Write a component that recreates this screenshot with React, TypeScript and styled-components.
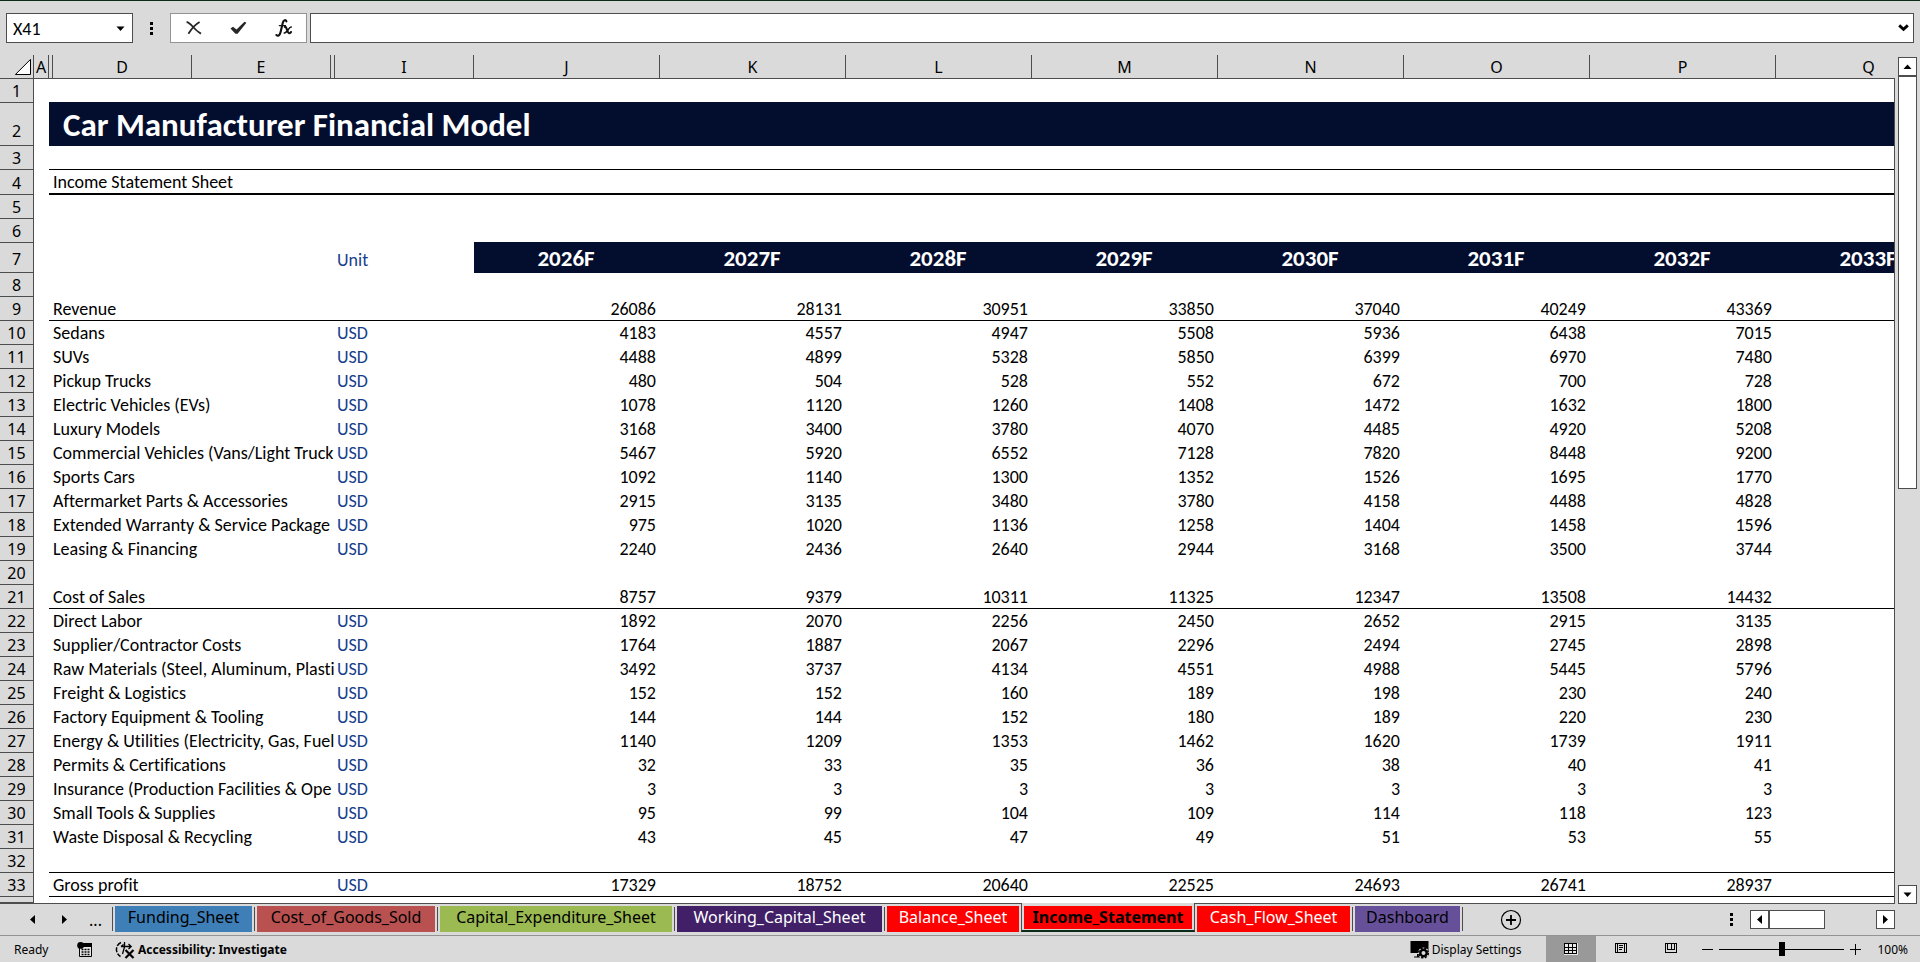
import React from "react";
import styled, { createGlobalStyle, css } from "styled-components";

const colors = {
  chrome: "#dadada",
  line: "#4d4d4d",
  softLine: "#939393",
  navy: "#030d2e",
  unit: "#163e8c",
  green: "#0b2b17",
};

const uiFont = `"Noto Sans", "Open Sans", sans-serif`;
const cellFont = `Carlito, Calibri, Lato, sans-serif`;

const GlobalStyle = createGlobalStyle`
  *, *::before, *::after { box-sizing: border-box; }
  body { margin: 0; background: ${colors.chrome}; color: #000; overflow: hidden; }
  button, input { font: inherit; color: inherit; margin: 0; }
  button { padding: 0; border: 0; background: none; display: inline-flex; align-items: center; justify-content: center; }
`;

const Window = styled.div`
  min-height: 100vh;
  display: flex;
  flex-direction: column;
  border-top: 1px solid ${colors.green};
  background: ${colors.chrome};
  font-family: ${uiFont};
`;

/* ---------- formula bar ---------- */

const FormulaBar = styled.header`
  display: flex;
  align-items: center;
  padding: 12px 6px 12px 6px;
`;

const NameBox = styled.div`
  display: flex;
  width: 127px;
  height: 30px;
  border: 1px solid ${colors.line};
  background: #fff;
`;

const NameInput = styled.input`
  flex: 1;
  min-width: 0;
  padding: 1px 0 0 6px;
  border: 0;
  outline: 0;
  background: none;
  font: 18px ${cellFont};
`;

const NameToggle = styled.button`
  width: 24px;
`;

const BarDots = styled.div`
  width: 37px;
  display: flex;
  justify-content: center;
`;

const FormulaActions = styled.div`
  display: flex;
  align-items: stretch;
  width: 137px;
  height: 30px;
  margin-right: 3px;
  border: 1px solid ${colors.softLine};
  background: #fff;
`;

const FormulaButton = styled.button`
  flex: 1;
`;

const FormulaBox = styled.div`
  flex: 1;
  display: flex;
  height: 30px;
  border: 1px solid ${colors.line};
  background: #fff;
`;

const FormulaInput = styled.input`
  flex: 1;
  min-width: 0;
  padding: 0 6px;
  border: 0;
  outline: 0;
  background: none;
`;

const ExpandButton = styled.button`
  width: 19px;
`;

/* ---------- sheet ---------- */

const Workspace = styled.main`
  flex: 1;
  display: flex;
`;

const SheetFrame = styled.div`
  position: relative;
  flex: 1;
  min-width: 0;
  overflow: hidden;
  border-bottom: 1px solid ${colors.line};
  background: #fff;

  &::after {
    content: "";
    position: absolute;
    top: 23px;
    right: 0;
    bottom: 0;
    width: 1px;
    background: ${colors.line};
  }
`;

const Grid = styled.table`
  width: 1961px;
  table-layout: fixed;
  border-collapse: separate;
  border-spacing: 0;
  font: 18px/21px ${cellFont};
  font-variant-ligatures: none;
`;

const Col = styled.col<{ $w: number }>`
  width: ${(p) => p.$w}px;
`;

const ColumnHead = styled.th`
  height: 24px;
  padding: 2px 0 0;
  overflow: hidden;
  border-right: 1px solid ${colors.line};
  border-bottom: 1px solid ${colors.line};
  background: ${colors.chrome};
  font: 400 16px/21px ${uiFont};
  text-align: center;
`;

const Corner = styled(ColumnHead)`
  padding: 0 1px 2px 0;
  text-align: right;
  line-height: 0;
  vertical-align: bottom;
`;

const Row = styled.tr<{ $h: number; $lift: number }>`
  height: ${(p) => p.$h}px;
  & > * {
    padding-top: ${(p) => (p.$h < 10 ? 0 : 2)}px;
    padding-bottom: ${(p) => p.$lift}px;
  }
`;

const RowHead = styled.th`
  padding-left: 0;
  padding-right: 0;
  border-right: 1px solid ${colors.line};
  border-bottom: 1px solid ${colors.line};
  background: ${colors.chrome};
  font: 400 16px/21px ${uiFont};
  text-align: center;
  vertical-align: bottom;
`;

type Edge = "none" | "thin" | "thick" | "navy";

const edges = {
  none: css`border-bottom: 0;`,
  thin: css`border-bottom: 1px solid #000;`,
  thick: css`border-bottom: 2px solid #000;`,
  navy: css`border-bottom: 1px solid ${colors.navy};`,
};

const Cell = styled.td<{ $edge?: Edge; $fill?: boolean }>`
  padding-left: 0;
  padding-right: 0;
  overflow: hidden;
  white-space: nowrap;
  vertical-align: top;
  background: ${(p) => (p.$fill ? colors.navy : "transparent")};
  ${(p) => edges[p.$edge ?? "none"]}
`;

const LabelCell = styled(Cell)`
  padding-left: 0;
`;

const UnitCell = styled(Cell)`
  padding-left: 2px;
  color: ${colors.unit};
`;

const UnitHeadCell = styled(UnitCell)`
  vertical-align: bottom;
`;

const ValueCell = styled(Cell)`
  padding-right: 4px;
  text-align: right;
`;

const TitleCell = styled(Cell)`
  padding-left: 14px;
  color: #fff;
  font-size: 33px;
  line-height: 36px;
  font-weight: 700;
  vertical-align: bottom;
`;

const YearCell = styled(Cell)`
  padding-right: 2px;
  color: #fff;
  font-size: 23px;
  line-height: 26px;
  font-weight: 700;
  text-align: center;
`;

/* ---------- scroll bars ---------- */

const VerticalBar = styled.div`
  width: 25px;
  padding: 2px 3px 0;
  display: flex;
  flex-direction: column;
`;

const ScrollButton = styled.button`
  flex: none;
  width: 19px;
  height: 19px;
  border: 1px solid ${colors.line};
  background: #fff;
`;

const VerticalTrack = styled.div`
  flex: 1;
`;

const VerticalThumb = styled.div`
  width: 19px;
  height: 51%;
  border: 1px solid ${colors.line};
  background: #fff;
`;

const HorizontalBar = styled.div`
  display: flex;
  width: 145px;
  margin-right: 25px;
`;

const HorizontalTrack = styled.div`
  flex: 1;
`;

const HorizontalThumb = styled.div`
  width: 56px;
  height: 19px;
  border: 1px solid ${colors.line};
  background: #fff;
`;

/* ---------- sheet tabs ---------- */

const TabBar = styled.nav`
  display: flex;
  align-items: center;
  height: 32px;
  border-bottom: 1px solid ${colors.softLine};
`;

const TabScroll = styled.div`
  display: flex;
  align-items: center;
  width: 112px;
  padding-left: 16px;
  font-size: 16px;
  line-height: 24px;
`;

const ArrowButton = styled.button`
  width: 32px;
  height: 24px;
`;

const MoreButton = styled.button`
  width: 31px;
  height: 24px;
`;

const TabList = styled.div`
  align-self: stretch;
  display: flex;
  align-items: flex-start;
`;

const activeSlot = css`
  height: 29px;
  margin-top: -1px;
  padding: 3px 2px 0;
  border: solid ${colors.line};
  border-width: 0 1px;
  border-bottom: 2px solid ${colors.green};
  background: ${colors.chrome};
`;

const TabSlot = styled.div<{ $active?: boolean; $noLine?: boolean }>`
  position: relative;
  display: flex;
  align-items: flex-start;
  padding: 2px 2px 0 ${(p) => (p.$noLine ? 2 : 0)}px;

  &::before {
    content: "";
    display: ${(p) => (p.$noLine || p.$active ? "none" : "block")};
    width: 1px;
    height: 24px;
    margin: 1px 2px 0 0;
    background: ${colors.line};
  }

  ${(p) => p.$active && activeSlot}
`;

const Tab = styled.button<{ $w: number; $bg: string; $fg: string; $active?: boolean }>`
  width: ${(p) => p.$w}px;
  height: ${(p) => (p.$active ? 23 : 26)}px;
  align-items: flex-start;
  background: ${(p) => p.$bg};
  color: ${(p) => p.$fg};
  font-size: 16px;
  line-height: 22px;
  font-weight: ${(p) => (p.$active ? 700 : 400)};
  white-space: nowrap;
`;

const TabEnd = styled.div`
  width: 1px;
  height: 24px;
  margin-top: 3px;
  background: ${colors.line};
`;

const AddButton = styled.button`
  width: 22px;
  height: 22px;
  margin-left: 37px;
`;

const Spacer = styled.div`
  flex: 1;
`;

const TabDots = styled.div`
  display: flex;
  margin-right: 17px;
`;

/* ---------- status bar ---------- */

const StatusBar = styled.footer`
  display: flex;
  align-items: center;
  height: 26px;
  padding: 0 12px 0 14px;
  font-size: 12px;
  line-height: 24px;
`;

const Ready = styled.span`
  width: 63px;
  padding-top: 2px;
`;

const StatusButton = styled.button<{ $bold?: boolean; $end?: number; $gap?: number }>`
  gap: ${(p) => p.$gap ?? 2}px;
  height: 26px;
  padding-top: 2px;
  margin-right: ${(p) => p.$end ?? 0}px;
  font-weight: ${(p) => (p.$bold ? 700 : 400)};
  white-space: nowrap;
`;

const ViewButton = styled.button<{ $on?: boolean }>`
  width: 50px;
  height: 26px;
  background: ${(p) => (p.$on ? "#999" : "transparent")};
`;

const ZoomStep = styled.button`
  width: 23px;
  height: 26px;
`;

const ZoomSlider = styled.input`
  appearance: none;
  width: 125px;
  height: 26px;
  background: linear-gradient(#000, #000) center / 100% 1px no-repeat;
  &::-webkit-slider-thumb {
    appearance: none;
    width: 6px;
    height: 14px;
    background: #000;
  }
`;

const ZoomValue = styled.button`
  margin-left: 10px;
  padding-top: 2px;
`;

/* ---------- icons ---------- */

const Triangle = ({ dir }: { dir: "up" | "down" | "left" | "right" }) => {
  const d = {
    up: "M0.5 7 L4.5 2.5 L8.5 7Z",
    down: "M0.5 2.5 L8.5 2.5 L4.5 7Z",
    left: "M7 0 L7 9 L2 4.5Z",
    right: "M2 0 L2 9 L7 4.5Z",
  }[dir];
  return (
    <svg width="9" height="9" viewBox="0 0 9 9" aria-hidden="true">
      <path d={d} />
    </svg>
  );
};

const DotsIcon = () => (
  <svg width="3" height="13" viewBox="0 0 3 13" shapeRendering="crispEdges" aria-hidden="true">
    <path d="M0 0h3v3H0zM0 5h3v3H0zM0 10h3v3H0z" />
  </svg>
);

const CancelIcon = () => (
  <svg width="16" height="14" viewBox="0 0 16 14" fill="none" stroke="#262626" aria-hidden="true">
    <path d="M0.6 1 C5 1.5 8 9 15 12.6" strokeWidth="1.8" />
    <path d="M13.6 1 C9 3.5 5 8.5 2.4 12.8" strokeWidth="1.8" />
  </svg>
);

const AcceptIcon = () => (
  <svg width="17" height="14" viewBox="0 0 17 14" aria-hidden="true">
    <path d="M0.5 7.5 L3 5.8 L6.5 8.6 L14.5 0.8 L16.4 1.8 L7.6 12.8 L5.4 12.8Z" fill="#262626" />
  </svg>
);

const FxIcon = () => (
  <svg width="18" height="20" viewBox="0 0 18 20" fill="none" stroke="#111" strokeLinecap="round" aria-hidden="true">
    <path d="M11.4 3.4 C11 1.4 8.6 1.6 7.8 4.8 L5.6 14 C4.8 17.4 3 18.6 1.4 17" strokeWidth="2.1" />
    <path d="M4.4 7.6 H10.4" strokeWidth="1.4" />
    <path d="M9.8 9 C12 8.2 12 14.8 14 15.2 C15 15.4 15.6 14.8 16 14" strokeWidth="2.1" />
    <path d="M16.2 9 C14 8.6 12 15.4 9.2 15" strokeWidth="1.5" />
  </svg>
);

const ChevronIcon = () => (
  <svg width="11" height="8" viewBox="0 0 11 8" fill="none" stroke="#000" strokeWidth="2.8" aria-hidden="true">
    <path d="M1.2 1.4 L5.5 5.4 L9.8 1.4" />
  </svg>
);

const CornerIcon = () => (
  <svg width="18" height="18" viewBox="0 0 18 18" aria-hidden="true">
    <path d="M16.5 1.4 V16.5 H1.4Z" fill="#fff" stroke="#000" />
  </svg>
);

const AddIcon = () => (
  <svg width="22" height="22" viewBox="0 0 22 22" fill="none" stroke="#000" aria-hidden="true">
    <circle cx="11" cy="11" r="9.5" strokeWidth="1.2" />
    <path d="M6 11 H16 M11 6 V16" strokeWidth="1.8" />
  </svg>
);

const MacroIcon = () => (
  <svg width="16" height="16" viewBox="0 0 16 16" aria-hidden="true">
    <path d="M2.5 3 V14.5 H14.5 V3" fill="#e8e8e8" stroke="#000" />
    <rect x="6" y="1" width="9" height="4" />
    <circle cx="3.6" cy="3.4" r="3.4" />
    <path d="M4.5 7.5h8M4.5 10h8M4.5 12.5h8" stroke="#000" strokeWidth="1.4" strokeDasharray="2 1" />
  </svg>
);

const AccessibilityIcon = () => (
  <svg width="20" height="18" viewBox="0 0 20 18" fill="none" stroke="#000" aria-hidden="true">
    <path d="M6 1.5 C0 4 0 12 5.5 15.5" strokeWidth="1.5" strokeDasharray="5 1.5" />
    <path d="M6 5.5 H16 M13.5 3 L16.2 5.5 L13.5 8 M8.5 3.5 L6 5.5 M9.5 1 V6 L7.5 13" strokeWidth="1.3" />
    <path d="M10.5 9 L18.5 17 M18.5 9 L10.5 17" strokeWidth="2.2" />
  </svg>
);

const DisplayIcon = () => (
  <svg width="20" height="18" viewBox="0 0 20 18" aria-hidden="true">
    <path d="M0.5 0 H18.5 V12 H0.5Z" />
    <path d="M4 16.5 H10 V13 H7 V15.5 H4Z" />
    <circle cx="13.5" cy="12" r="5.6" fill="#dadada" />
    <circle cx="13.5" cy="12" r="3.2" fill="none" stroke="#000" strokeWidth="2.4" />
    <circle cx="13.5" cy="12" r="4.8" fill="none" stroke="#000" strokeWidth="1.6" strokeDasharray="2.2 1.6" />
  </svg>
);

const NormalViewIcon = () => (
  <svg width="14" height="12" viewBox="0 0 14 12" shapeRendering="crispEdges" aria-hidden="true">
    <rect width="14" height="12" fill="#e8e8e8" />
    <path d="M.5 .5h12v10h-12zM.5 4h12M.5 7.5h12M4.5 .5v10M8.5 .5v10" fill="none" stroke="#000" />
  </svg>
);

const PageViewIcon = () => (
  <svg width="13" height="12" viewBox="0 0 13 12" shapeRendering="crispEdges" fill="none" stroke="#000" aria-hidden="true">
    <path d="M.5 .5h11v9H.5z" />
    <path d="M2.5 .5v9M9.5 .5v9" />
    <path d="M4 2.5h4M4 4.5h4M4 6.5h3" />
  </svg>
);

const BreakViewIcon = () => (
  <svg width="13" height="12" viewBox="0 0 13 12" shapeRendering="crispEdges" fill="none" stroke="#000" aria-hidden="true">
    <path d="M.5 .5h11v9H.5z" />
    <path d="M2.5 .5v6h7v-6M6 .5v6" />
  </svg>
);

const StepIcon = ({ plus }: { plus?: boolean }) => (
  <svg width="11" height="11" viewBox="0 0 11 11" stroke="#000" shapeRendering="crispEdges" aria-hidden="true">
    <path d={plus ? "M0 5.5H11M5.5 0V11" : "M0 5.5H11"} />
  </svg>
);

/* ---------- data ---------- */

const columns: [string, number][] = [
  ["A", 15],
  ["", 4],
  ["D", 139],
  ["E", 139],
  ["", 4],
  ["I", 139],
  ["J", 186],
  ["K", 186],
  ["L", 186],
  ["M", 186],
  ["N", 186],
  ["O", 186],
  ["P", 186],
  ["Q", 186],
];

const years = ["2026F", "2027F", "2028F", "2029F", "2030F", "2031F", "2032F", "2033F"];

type Line = { label: string; unit?: string; values: number[]; edge?: Edge };

const lines: Record<number, Line> = {
  9: { label: "Revenue", values: [26086, 28131, 30951, 33850, 37040, 40249, 43369], edge: "thin" },
  10: { label: "Sedans", unit: "USD", values: [4183, 4557, 4947, 5508, 5936, 6438, 7015] },
  11: { label: "SUVs", unit: "USD", values: [4488, 4899, 5328, 5850, 6399, 6970, 7480] },
  12: { label: "Pickup Trucks", unit: "USD", values: [480, 504, 528, 552, 672, 700, 728] },
  13: { label: "Electric Vehicles (EVs)", unit: "USD", values: [1078, 1120, 1260, 1408, 1472, 1632, 1800] },
  14: { label: "Luxury Models", unit: "USD", values: [3168, 3400, 3780, 4070, 4485, 4920, 5208] },
  15: { label: "Commercial Vehicles (Vans/Light Truck", unit: "USD", values: [5467, 5920, 6552, 7128, 7820, 8448, 9200] },
  16: { label: "Sports Cars", unit: "USD", values: [1092, 1140, 1300, 1352, 1526, 1695, 1770] },
  17: { label: "Aftermarket Parts & Accessories", unit: "USD", values: [2915, 3135, 3480, 3780, 4158, 4488, 4828] },
  18: { label: "Extended Warranty & Service Package", unit: "USD", values: [975, 1020, 1136, 1258, 1404, 1458, 1596] },
  19: { label: "Leasing & Financing", unit: "USD", values: [2240, 2436, 2640, 2944, 3168, 3500, 3744] },
  21: { label: "Cost of Sales", values: [8757, 9379, 10311, 11325, 12347, 13508, 14432], edge: "thin" },
  22: { label: "Direct Labor", unit: "USD", values: [1892, 2070, 2256, 2450, 2652, 2915, 3135] },
  23: { label: "Supplier/Contractor Costs", unit: "USD", values: [1764, 1887, 2067, 2296, 2494, 2745, 2898] },
  24: { label: "Raw Materials (Steel, Aluminum, Plasti", unit: "USD", values: [3492, 3737, 4134, 4551, 4988, 5445, 5796] },
  25: { label: "Freight & Logistics", unit: "USD", values: [152, 152, 160, 189, 198, 230, 240] },
  26: { label: "Factory Equipment & Tooling", unit: "USD", values: [144, 144, 152, 180, 189, 220, 230] },
  27: { label: "Energy & Utilities (Electricity, Gas, Fuel", unit: "USD", values: [1140, 1209, 1353, 1462, 1620, 1739, 1911] },
  28: { label: "Permits & Certifications", unit: "USD", values: [32, 33, 35, 36, 38, 40, 41] },
  29: { label: "Insurance (Production Facilities & Ope", unit: "USD", values: [3, 3, 3, 3, 3, 3, 3] },
  30: { label: "Small Tools & Supplies", unit: "USD", values: [95, 99, 104, 109, 114, 118, 123] },
  31: { label: "Waste Disposal & Recycling", unit: "USD", values: [43, 45, 47, 49, 51, 53, 55] },
  33: { label: "Gross profit", unit: "USD", values: [17329, 18752, 20640, 22525, 24693, 26741, 28937], edge: "thin" },
};

const rowHeights: Record<number, number> = { 2: 43, 4: 25, 7: 30, 34: 6 };
const rowLifts: Record<number, number> = { 2: 3, 7: 2 };
const emptyRowEdges: Record<number, Edge> = { 1: "navy", 3: "thin", 32: "thin" };

const tabs = [
  { name: "Funding_Sheet", w: 137, bg: "#3e7fb8", fg: "#000" },
  { name: "Cost_of_Goods_Sold", w: 178, bg: "#b85150", fg: "#000" },
  { name: "Capital_Expenditure_Sheet", w: 232, bg: "#9bba52", fg: "#000" },
  { name: "Working_Capital_Sheet", w: 205, bg: "#412067", fg: "#fff" },
  { name: "Balance_Sheet", w: 132, bg: "#ff0000", fg: "#fff" },
  { name: "Income_Statement", w: 168, bg: "#ff0000", fg: "#000", active: true },
  { name: "Cash_Flow_Sheet", w: 153, bg: "#ff0000", fg: "#fff", noLine: true },
  { name: "Dashboard", w: 105, bg: "#67509a", fg: "#000" },
];

const RowCells = ({ n }: { n: number }) => {
  if (n === 2) return <TitleCell colSpan={13} $fill>Car Manufacturer Financial Model</TitleCell>;
  if (n === 4)
    return (
      <>
        <Cell $edge="thick" />
        <LabelCell colSpan={12} $edge="thick">Income Statement Sheet</LabelCell>
      </>
    );
  if (n === 6)
    return (
      <>
        <Cell colSpan={5} />
        <Cell colSpan={8} $edge="navy" />
      </>
    );
  if (n === 7)
    return (
      <>
        <Cell colSpan={4} />
        <UnitHeadCell>Unit</UnitHeadCell>
        {years.map((y) => (
          <YearCell key={y} $fill>{y}</YearCell>
        ))}
      </>
    );
  const line = lines[n];
  if (!line) return <Cell colSpan={13} $edge={emptyRowEdges[n]} />;
  return (
    <>
      <Cell $edge={line.edge} />
      <LabelCell colSpan={3} $edge={line.edge}>{line.label}</LabelCell>
      <UnitCell $edge={line.edge}>{line.unit}</UnitCell>
      {line.values.map((v, i) => (
        <ValueCell key={i} $edge={line.edge}>{v}</ValueCell>
      ))}
      <ValueCell $edge={line.edge} />
    </>
  );
};

export default function App() {
  return (
    <Window>
      <GlobalStyle />
      <FormulaBar>
        <NameBox>
          <NameInput aria-label="Name box" defaultValue="X41" />
          <NameToggle aria-label="Open name list">
            <Triangle dir="down" />
          </NameToggle>
        </NameBox>
        <BarDots>
          <DotsIcon />
        </BarDots>
        <FormulaActions>
          <FormulaButton aria-label="Cancel"><CancelIcon /></FormulaButton>
          <FormulaButton aria-label="Enter"><AcceptIcon /></FormulaButton>
          <FormulaButton aria-label="Insert function"><FxIcon /></FormulaButton>
        </FormulaActions>
        <FormulaBox>
          <FormulaInput aria-label="Formula" />
          <ExpandButton aria-label="Expand formula bar"><ChevronIcon /></ExpandButton>
        </FormulaBox>
      </FormulaBar>

      <Workspace>
        <SheetFrame>
          <Grid>
            <colgroup>
              <Col $w={34} />
              {columns.map(([, w], i) => (
                <Col key={i} $w={w} />
              ))}
            </colgroup>
            <thead>
              <tr>
                <Corner><CornerIcon /></Corner>
                {columns.map(([name], i) => (
                  <ColumnHead key={i} scope="col">{name}</ColumnHead>
                ))}
              </tr>
            </thead>
            <tbody>
              {Array.from({ length: 34 }, (_, i) => i + 1).map((n) => (
                <Row key={n} $h={rowHeights[n] ?? 24} $lift={rowLifts[n] ?? 0}>
                  <RowHead scope="row">{n < 34 ? n : null}</RowHead>
                  <Cell />
                  <RowCells n={n} />
                </Row>
              ))}
            </tbody>
          </Grid>
        </SheetFrame>
        <VerticalBar>
          <ScrollButton aria-label="Scroll up"><Triangle dir="up" /></ScrollButton>
          <VerticalTrack><VerticalThumb /></VerticalTrack>
          <ScrollButton aria-label="Scroll down"><Triangle dir="down" /></ScrollButton>
        </VerticalBar>
      </Workspace>

      <TabBar>
        <TabScroll>
          <ArrowButton aria-label="Previous sheet"><Triangle dir="left" /></ArrowButton>
          <ArrowButton aria-label="Next sheet"><Triangle dir="right" /></ArrowButton>
          <MoreButton>...</MoreButton>
        </TabScroll>
        <TabList>
          {tabs.map((t) => (
            <TabSlot key={t.name} $active={t.active} $noLine={t.noLine}>
              <Tab $w={t.w} $bg={t.bg} $fg={t.fg} $active={t.active}>{t.name}</Tab>
            </TabSlot>
          ))}
          <TabEnd />
        </TabList>
        <AddButton aria-label="New sheet"><AddIcon /></AddButton>
        <Spacer />
        <TabDots><DotsIcon /></TabDots>
        <HorizontalBar>
          <ScrollButton aria-label="Scroll left"><Triangle dir="left" /></ScrollButton>
          <HorizontalTrack><HorizontalThumb /></HorizontalTrack>
          <ScrollButton aria-label="Scroll right"><Triangle dir="right" /></ScrollButton>
        </HorizontalBar>
      </TabBar>

      <StatusBar>
        <Ready>Ready</Ready>
        <StatusButton $end={22} aria-label="Record macro"><MacroIcon /></StatusButton>
        <StatusButton $bold $gap={3}><AccessibilityIcon />Accessibility: Investigate</StatusButton>
        <Spacer />
        <StatusButton $end={25}><DisplayIcon />Display Settings</StatusButton>
        <ViewButton $on aria-label="Normal view"><NormalViewIcon /></ViewButton>
        <ViewButton aria-label="Page layout view"><PageViewIcon /></ViewButton>
        <ViewButton aria-label="Page break preview"><BreakViewIcon /></ViewButton>
        <ZoomStep aria-label="Zoom out"><StepIcon /></ZoomStep>
        <ZoomSlider type="range" aria-label="Zoom" min={0} max={100} defaultValue={50} />
        <ZoomStep aria-label="Zoom in"><StepIcon plus /></ZoomStep>
        <ZoomValue>100%</ZoomValue>
      </StatusBar>
    </Window>
  );
}
